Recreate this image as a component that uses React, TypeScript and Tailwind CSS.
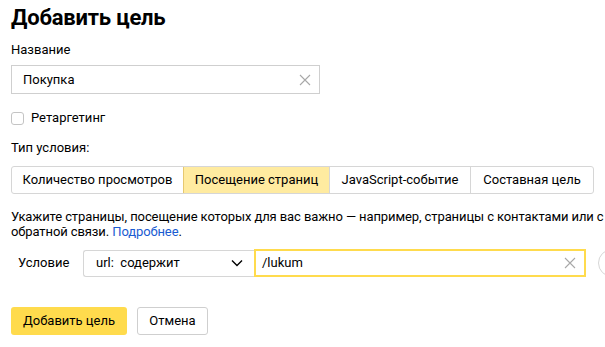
const tabs = [
  { label: "Количество просмотров", w: "w-[171px]" },
  { label: "Посещение страниц", w: "w-[146px]", active: true },
  { label: "JavaScript-событие", w: "w-[141px]" },
  { label: "Составная цель", w: "w-[123px]" },
]

function ClearIcon({ className }: { className?: string }) {
  return (
    <svg width="12" height="12" viewBox="0 0 12 12" className={className}>
      <path d="M1 1L11 11M11 1L1 11" stroke="currentColor" strokeWidth="1.1" />
    </svg>
  )
}

export default function App() {
  return (
    <div className="h-[347px] w-[605px] overflow-hidden bg-white pl-[11px] font-['Roboto',sans-serif] text-[13px] text-[#000]">
      <div className="w-[680px]">
        <h1 className="pt-[4px] text-[22px] font-bold leading-[28px] tracking-[-0.2px]">
          Добавить цель
        </h1>

        <div className="mt-[10px] leading-[16px]">Название</div>

        <div className="mt-[7px] flex h-[29px] w-[309px] items-center border border-[#cfcfcf] pl-[11px] pr-[8px]">
          <span className="flex-1 leading-[16px]">Покупка</span>
          <ClearIcon className="text-[#a8a8a8]" />
        </div>

        <label className="mt-[16px] flex h-[16px] items-center gap-[7px]">
          <span className="h-[13px] w-[13px] rounded-[3px] border border-[#c4c4c4] bg-white" />
          <span className="leading-[16px]">Ретаргетинг</span>
        </label>

        <div className="mt-[14px] leading-[16px]">Тип условия:</div>

        <div className="mt-[10px] flex h-[28px] w-fit rounded-[3px] border border-[#d6d6d6]">
          {tabs.map((t, i) => (
            <div
              key={t.label}
              className={`${t.w} flex items-center justify-center ${
                i > 0 ? "border-l border-[#d6d6d6]" : ""
              } ${t.active ? "border-[#e6c870] bg-[#ffeba0]" : ""}`}
            >
              {t.label}
            </div>
          ))}
        </div>

        <p className="mt-[15px] w-[660px] leading-[15px] tracking-[-0.1px]">
          Укажите страницы, посещение которых для вас важно — например, страницы
          с контактами или с формой обратной связи.{" "}
          <span className="text-[#1a5bd1]">Подробнее</span>.
        </p>

        <div className="mt-[10px] flex h-[28px] items-center">
          <span className="ml-[7px] w-[65px]">Условие</span>
          <div className="flex h-[27px] w-[171px] items-center rounded-l-[3px] border border-r-0 border-[#d6d6d6] pl-[12px] pr-[11px]">
            <span className="flex-1 whitespace-pre">url:  содержит</span>
            <svg width="12" height="8" viewBox="0 0 12 8">
              <path d="M1 1.5L6 6.5L11 1.5" fill="none" stroke="#000" strokeWidth="1.4" />
            </svg>
          </div>
          <div className="flex h-[28px] w-[332px] items-center border-2 border-[#ffdb4d] pl-[6px] pr-[8px]">
            <span className="flex-1">/lukum</span>
            <ClearIcon className="text-[#a8a8a8]" />
          </div>
          <div className="ml-[12px] h-[28px] w-[28px] shrink-0 rounded-full border border-[#d6d6d6]" />
        </div>

        <div className="mt-[30px] flex gap-[10px]">
          <button
            type="button"
            className="h-[28px] w-[116px] rounded-[3px] bg-[#ffdb4d] text-[13px]"
          >
            Добавить цель
          </button>
          <button
            type="button"
            className="h-[28px] w-[71px] rounded-[3px] border border-[#cfcfcf] bg-white text-[13px]"
          >
            Отмена
          </button>
        </div>
      </div>
    </div>
  )
}
